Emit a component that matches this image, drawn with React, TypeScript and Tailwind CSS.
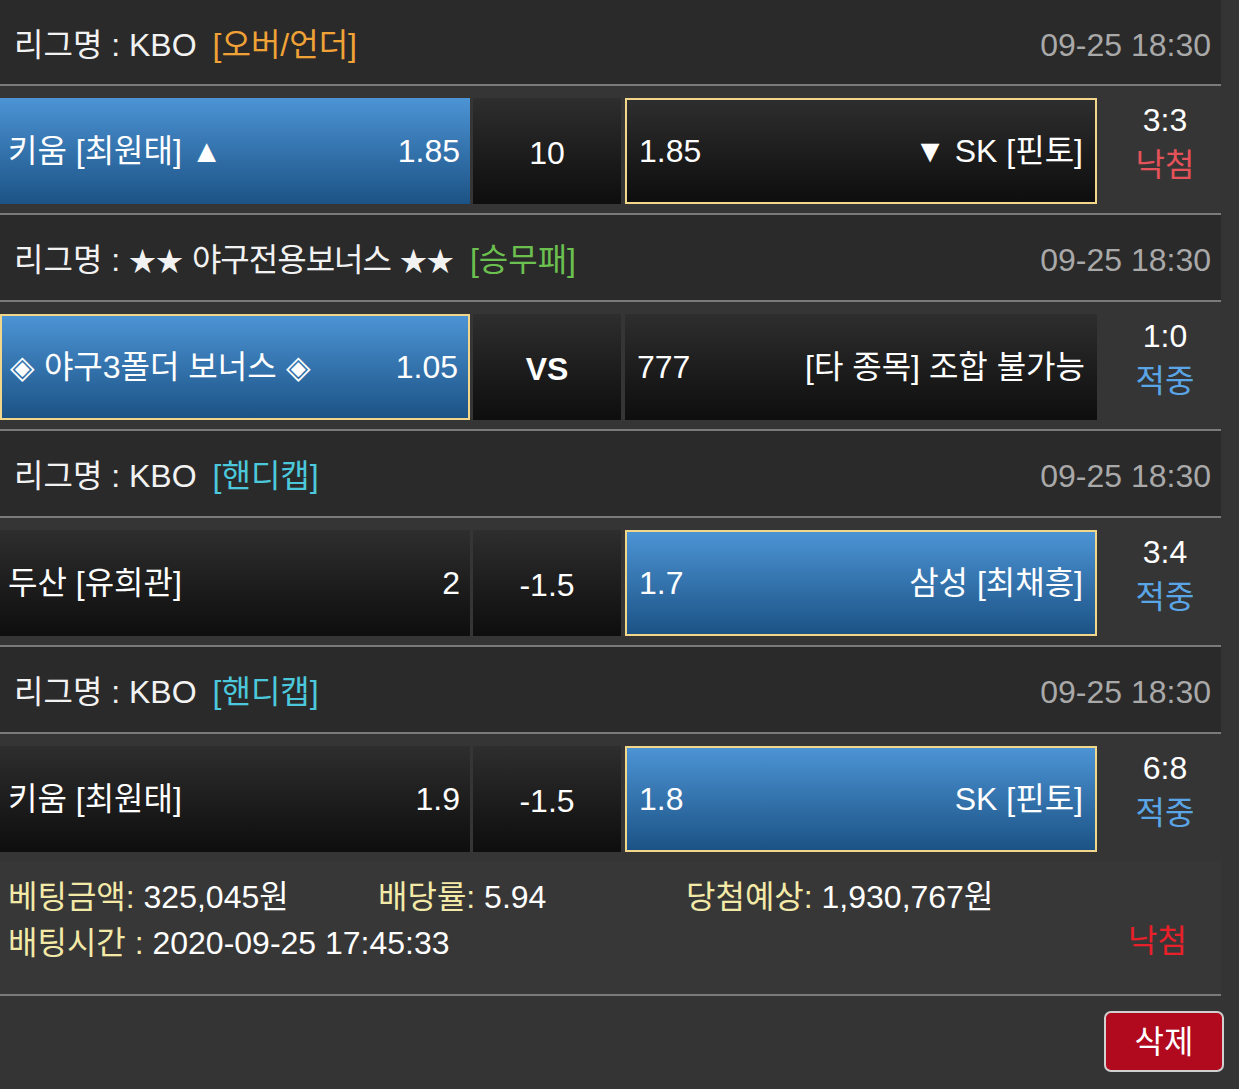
import React from "react";

const FONT = { fontFamily: '"Liberation Sans", "Noto Sans CJK KR", sans-serif' };

function Header({ name, tag, tagColor, h }: { name: React.ReactNode; tag: string; tagColor: string; h: string }) {
  return (
    <div className={`${h} bg-[#2a2a2a] flex items-center justify-between pl-[14px] pr-[10px] pt-[5px] border-b-2 border-[#7a7a7a]`}>
      <div className="flex items-center text-[32px] text-[#f2f2f2]">
        <span>{name}</span>
        <span className={`ml-[16px] ${tagColor}`}>{tag}</span>
      </div>
      <div className="text-[32px] text-[#a9a9a9]">09-25 18:30</div>
    </div>
  );
}

type CellProps = { left: React.ReactNode; right: React.ReactNode; blue?: boolean; sel?: boolean; w: string; padL: string; padR: string };

function Cell({ left, right, blue, sel, w, padL, padR }: CellProps) {
  const bg = blue
    ? "bg-gradient-to-b from-[#4c94d5] to-[#1c5386]"
    : "bg-gradient-to-b from-[#2e2e2e] to-[#0e0e0e]";
  const border = sel ? "border-2 border-[#f2d68a]" : "";
  return (
    <div className={`${w} h-[106px] ${bg} ${border} flex items-center justify-between ${padL} ${padR} text-[32px] text-white`}>
      <span>{left}</span>
      <span>{right}</span>
    </div>
  );
}

function Row({
  a, aOdd, aBlue, aSel, mid, midBold, b, bOdd, bBlue, bSel, score, result, resultColor, last,
}: {
  a: string; aOdd: string; aBlue?: boolean; aSel?: boolean; mid: string; midBold?: boolean;
  b: string; bOdd: string; bBlue?: boolean; bSel?: boolean; score: string; result: string; resultColor: string; last?: boolean;
}) {
  return (
    <div className={`${last ? "h-[127px]" : "h-[129px] border-b-2 border-[#7a7a7a]"} bg-[#353535] flex items-start pt-[12px]`}>
      <Cell left={a} right={aOdd} blue={aBlue} sel={aSel} w="w-[470px]" padL="pl-[8px]" padR="pr-[10px]" />
      <div className="ml-[3px] w-[148px] h-[106px] bg-gradient-to-b from-[#2e2e2e] to-[#0e0e0e] flex items-center justify-center text-[32px] text-white pt-[4px]">
        <span className={midBold ? "font-bold" : ""}>{mid}</span>
      </div>
      <div className="ml-[4px]">
        <Cell left={bOdd} right={b} blue={bBlue} sel={bSel} w="w-[472px]" padL="pl-[12px]" padR="pr-[12px]" />
      </div>
      <div className="flex-1 flex flex-col items-center text-[32px] leading-[45px] pl-[12px]">
        <span className="text-white">{score}</span>
        <span className={resultColor}>{result}</span>
      </div>
    </div>
  );
}

export default function App() {
  return (
    <div className="w-[1239px] h-[1089px] bg-[#343434] overflow-hidden" style={FONT}>
      <div className="w-[1221px]">
        <Header h="h-[86px]" name="리그명 : KBO" tag="[오버/언더]" tagColor="text-[#f0a236]" />
        <Row a="키움 [최원태] ▲" aOdd="1.85" aBlue mid="10" b="▼ SK [핀토]" bOdd="1.85" bSel score="3:3" result="낙첨" resultColor="text-[#e4525a]" />
        <Header
          h="h-[87px]"
          name={
            <>
              리그명 : <span className="text-[27px]">★★</span> <span className="tracking-[-1px]">야구전용보너스</span> <span className="text-[27px]">★★</span>
            </>
          }
          tag="[승무패]"
          tagColor="text-[#6cc050]"
        />
        <Row a="◈ 야구3폴더 보너스 ◈" aOdd="1.05" aBlue aSel mid="VS" midBold b="[타 종목] 조합 불가능" bOdd="777" score="1:0" result="적중" resultColor="text-[#5aa5e6]" />
        <Header h="h-[87px]" name="리그명 : KBO" tag="[핸디캡]" tagColor="text-[#4cc8dc]" />
        <Row a="두산 [유희관]" aOdd="2" mid="-1.5" b="삼성 [최채흥]" bOdd="1.7" bBlue bSel score="3:4" result="적중" resultColor="text-[#5aa5e6]" />
        <Header h="h-[87px]" name="리그명 : KBO" tag="[핸디캡]" tagColor="text-[#4cc8dc]" />
        <Row a="키움 [최원태]" aOdd="1.9" mid="-1.5" b="SK [핀토]" bOdd="1.8" bBlue bSel score="6:8" result="적중" resultColor="text-[#5aa5e6]" last />
        <div className="h-[135px] bg-[#373737] border-b-2 border-[#7a7a7a] flex items-start justify-between pl-[8px] pr-[34px] pt-[13px] text-[32px]">
          <div className="flex flex-col leading-[46px]">
            <div className="flex">
              <span className="w-[370px]"><span className="text-[#f3eaa8]">베팅금액:</span> <span className="text-white">325,045원</span></span>
              <span className="w-[308px]"><span className="text-[#f3eaa8]">배당률:</span> <span className="text-white">5.94</span></span>
              <span><span className="text-[#f3eaa8]">당첨예상:</span> <span className="text-white">1,930,767원</span></span>
            </div>
            <div><span className="text-[#f3eaa8]">배팅시간 :</span> <span className="text-white">2020-09-25 17:45:33</span></div>
          </div>
          <div className="text-[#e8202a] mt-[44px] leading-[46px]">낙첨</div>
        </div>
      </div>
      <div className="w-[1239px] flex justify-end pr-[15px] pt-[15px]">
        <button className="w-[120px] h-[61px] rounded-[7px] border-2 border-[#d0d0d0] bg-[#b10a1e] text-white text-[32px] flex items-center justify-center">
          삭제
        </button>
      </div>
    </div>
  );
}
